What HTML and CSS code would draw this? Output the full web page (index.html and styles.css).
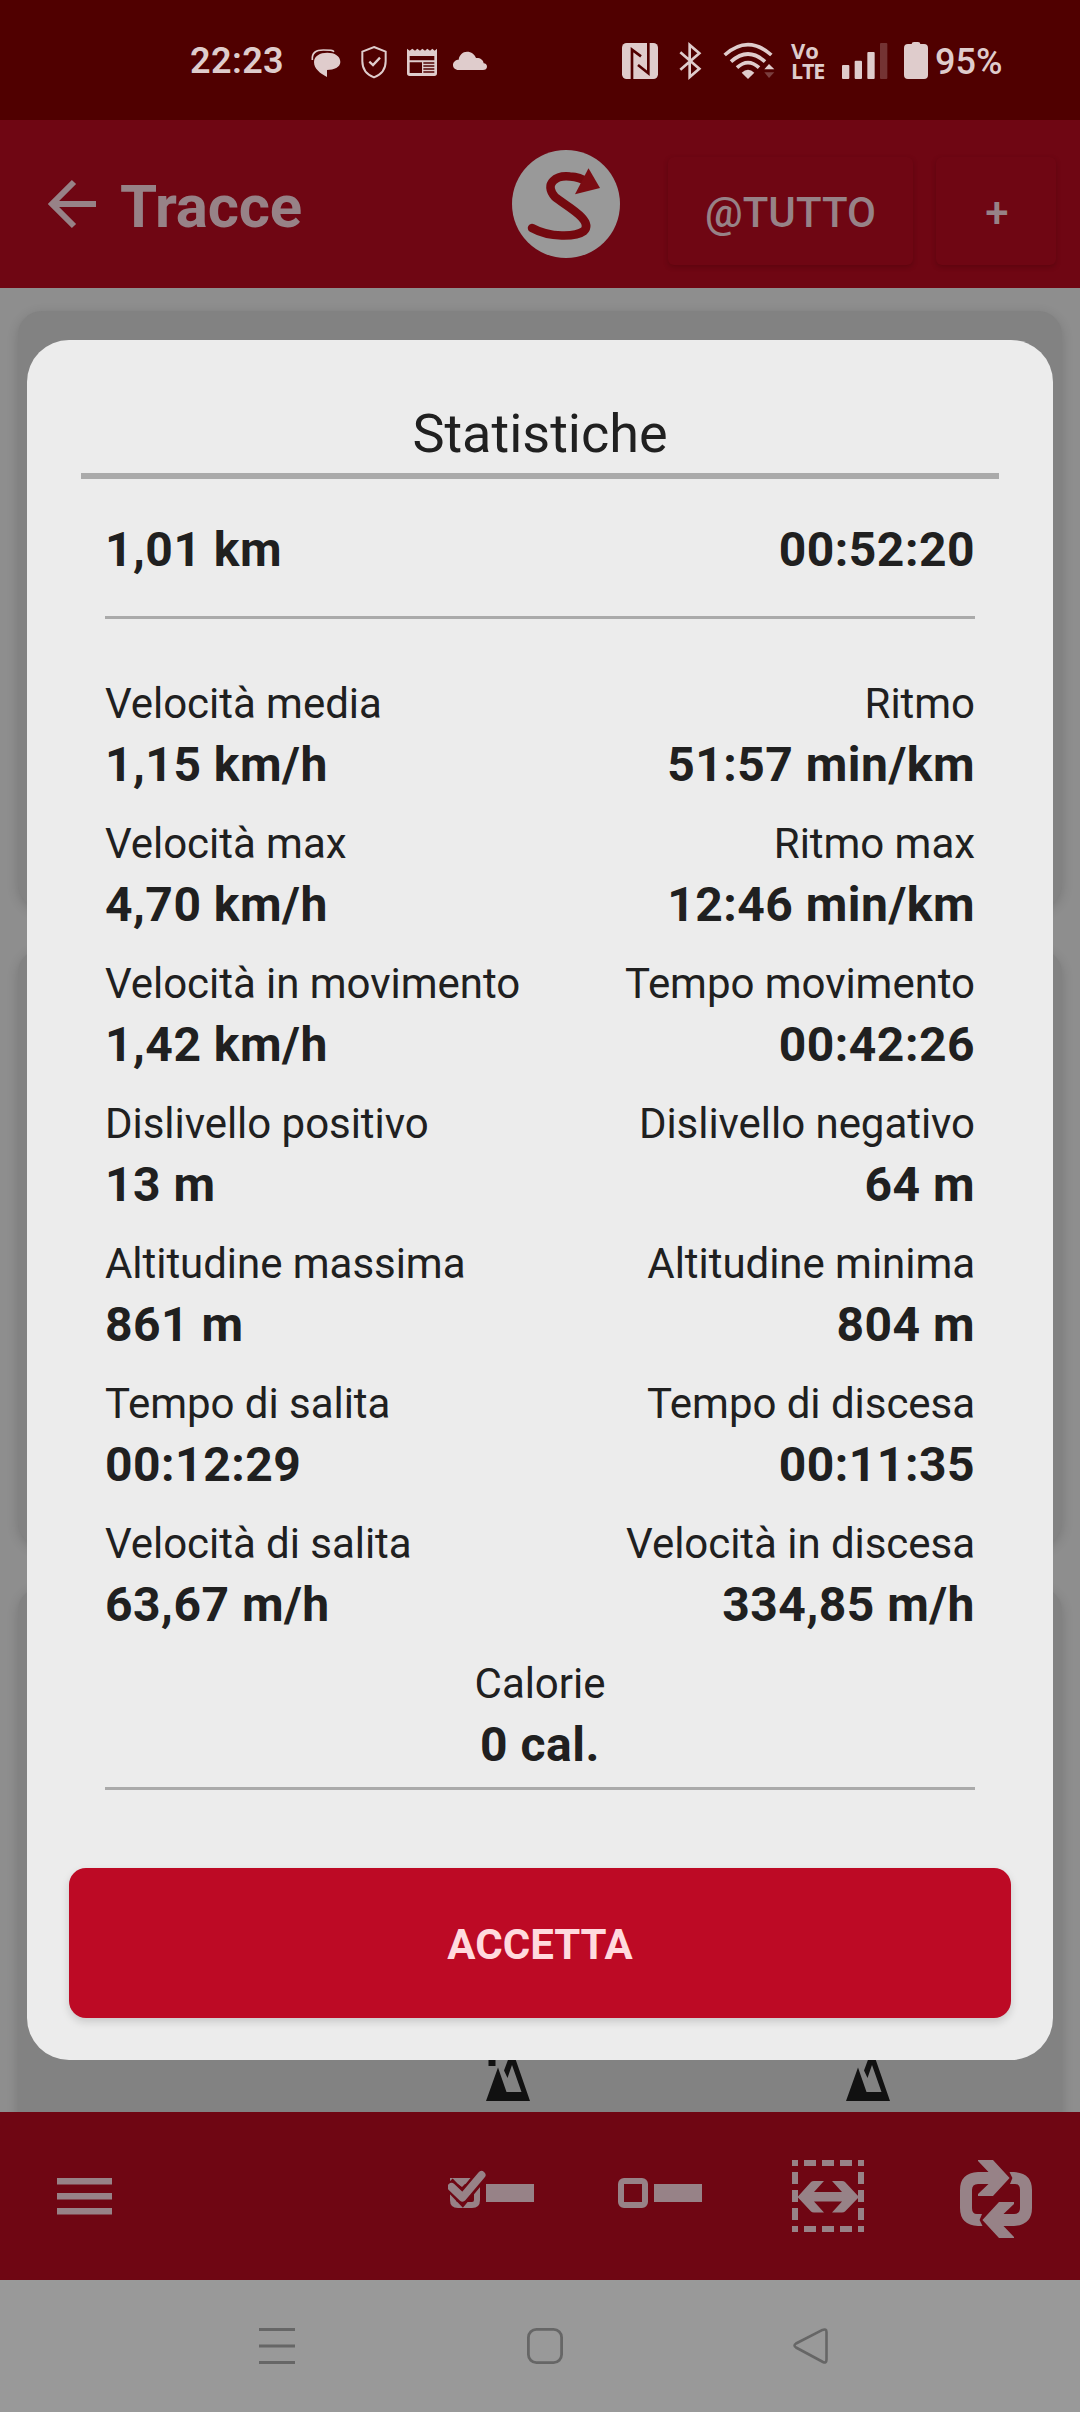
FILE: index.html
```html
<!DOCTYPE html>
<html lang="it">
<head>
<meta charset="utf-8">
<title>Tracce</title>
<link rel="stylesheet" href="styles.css">
</head>
<body>
<div class="screen">
  <header class="status">
    <span class="clock">22:23</span>
    <div class="status-left">
      <svg width="32" height="40" viewBox="450 60 96 120" fill="currentColor"><path d="M462 126C462 108 480 98 502 98S541 108 541 126C541 142 522 150 501 150V171C480 160 462 146 462 126Z"/><path d="M457 120C455 98 468 90 490 90S518 90 522 95" fill="none" stroke="currentColor" stroke-width="5"/></svg>
      <svg width="28" height="40" viewBox="600 60 84 120" fill="none" stroke="currentColor" stroke-width="6"><path d="M642 81L677 95V124C677 147 664 164 642 172C620 164 607 147 607 124V95Z"/><path d="M628 125L639 135L660 113" stroke-width="7"/></svg>
      <svg width="32" height="40" viewBox="738 60 96 120" fill="currentColor"><path fill-rule="evenodd" d="M741 86L749 92L757 86L765 92L772 86L780 92L787 86L795 92L802 86L810 92L817 86L824 92L831 86V160Q831 168 823 168H749Q741 168 741 160ZM749 108V121H823V108ZM749 127V159H786V127ZM790 127V131H823V127ZM790 136V140H823V136ZM790 145V149H823V145ZM790 154V158H823V154Z"/></svg>
      <svg width="36" height="40" viewBox="876 60 108 120" fill="currentColor"><path d="M896 150C885 150 879 143 879 135C879 125 888 119 896 119C898 105 908 95 921 95C934 95 944 103 948 114C960 113 970 119 971 130C977 130 981 135 981 140C981 146 976 150 969 150Z"/></svg>
    </div>
    <div class="status-right">
      <svg width="38" height="40" viewBox="63 60 114 120"><rect x="66" y="69" width="108" height="108" rx="14" fill="currentColor"/><path d="M96 177V89L123 109M145 69V160L114 135" fill="none" stroke="#500000" stroke-width="8"/></svg>
      <svg width="24" height="40" viewBox="234 60 72 120" fill="none" stroke="currentColor" stroke-width="8"><path d="M241 97L298 146L269 171V75L298 100L241 149"/></svg>
      <svg width="54" height="40" viewBox="366 60 162 120"><g fill="none" stroke="currentColor" stroke-width="11"><path d="M374 105Q444 43 514 105"/><path d="M393 125Q444 79 495 125"/><path d="M411 143Q444 113 477 143"/></g><path d="M425 158Q444 141 463 158L444 177Z" fill="currentColor"/><path d="M493 148L507 132L523 148Z" fill="currentColor"/><path d="M493 157H523L507 174Z" fill="currentColor" opacity=".3"/></svg>
      <div class="volte"><span class="vo">Vo</span><span class="lte">LTE</span></div>
      <svg width="46" height="40" viewBox="726 60 138 120" fill="currentColor"><rect x="726" y="135" width="22" height="42" rx="3"/><rect x="764" y="122" width="22" height="55" rx="3"/><rect x="802" y="96" width="22" height="81" rx="3"/><rect x="840" y="69" width="22" height="108" rx="3" opacity=".25"/></svg>
      <svg width="24" height="40" viewBox="912 60 72 120" fill="currentColor"><path d="M924 72H935Q935 66 942 66H954Q961 66 961 72H972Q984 72 984 84V165Q984 177 972 177H924Q912 177 912 165V84Q912 72 924 72Z"/></svg>
      <span class="battery">95%</span>
    </div>
  </header>

  <div class="toolbar">
    <svg class="back" width="48" height="50" viewBox="0 0 48 50" fill="none" stroke="currentColor" stroke-width="6"><path d="M48 25H5M26 3L4 25L26 47"/></svg>
    <h1 class="page-title">Tracce</h1>
    <svg class="logo" width="108" height="108" viewBox="0 0 108 108"><circle cx="54" cy="54" r="54" fill="#999"/><path d="M20 78C38 88 64 87 72 81C82 70 54 56 43 47C31 33 45 25 58 26.500Q68 27 75 32" fill="none" stroke="#74090f" stroke-width="8.500" stroke-linecap="round" stroke-linejoin="round"/><path d="M88 38L76.500 18.300L63 44.300Z" fill="#7b0c12"/></svg>
    <button class="chip chip-all">@TUTTO</button>
    <button class="chip chip-add">+</button>
  </div>

  <main class="list">
    <div class="card"></div>
    <div class="card"></div>
    <div class="card card-peaks">
      <svg width="44" height="54" viewBox="0 0 44 54" fill="#111"><path d="M2.500 8H9.500V19H2.500Z"/><path fill-rule="evenodd" d="M0 54L12 20.500L20.500 45H35.500L26 18L21.500 31L18 23.500L26 2L44 54Z"/></svg>
      <svg width="44" height="54" viewBox="0 0 44 54" fill="#111"><path d="M0 54L12 20.500L20.500 45H35.500L26 18L21.500 31L18 23.500L26 2L44 54Z"/></svg>
    </div>
  </main>

  <footer class="actions">
    <svg width="55" height="78" viewBox="57 160 55 78" fill="currentColor"><path d="M57 178H112V184.500H57ZM57 193H112V199.500H57ZM57 208H112V214.500H57Z"/></svg>
    <svg class="act-check" width="86" height="78" viewBox="448 160 86 78" fill="none" stroke="currentColor"><path d="M453 181H477V200Q477 205 472 205H458Q453 205 453 200Z" stroke-width="6"/><path d="M452 180H469L462 187Z" fill="currentColor" stroke="none"/><path d="M448 183L462.500 198L484 172" stroke="#6f0613" stroke-width="13"/><path d="M451.500 187L462.500 197.500L481.500 175" stroke-width="8" stroke-linecap="round" stroke-linejoin="round"/><path d="M486 184H534V202H486Z" fill="currentColor" stroke="none"/></svg>
    <svg class="act-box" width="84" height="78" viewBox="618 160 84 78"><rect x="621" y="181" width="24" height="24" rx="3" fill="none" stroke="currentColor" stroke-width="6"/><path d="M654 184H702V202H654Z" fill="currentColor"/></svg>
    <svg class="act-range" width="72" height="78" viewBox="792 160 72 78" fill="currentColor"><path d="M792 160h6v6h-6zM804 160h12v6h-12zM822 160h12v6h-12zM840 160h12v6h-12zM858 160h6v6h-6zM792 226h6v6h-6zM804 226h12v6h-12zM822 226h12v6h-12zM840 226h12v6h-12zM858 226h6v6h-6zM792 172h6v12h-6zM792 190h6v12h-6zM792 208h6v12h-6zM858 172h6v12h-6zM858 190h6v12h-6zM858 208h6v12h-6z"/><path d="M797.500 197L811 182Q812 181 814 181H824L814 192H842L832 181H842Q844 181 845 182L859 197L845 211.500Q844 212.500 842 212.500H832L842 201.500H814L824 212.500H814Q812 212.500 811 211.500Z"/></svg>
    <svg class="act-sync" width="72" height="78" viewBox="960 160 72 78" fill="currentColor"><path id="half" d="M988.500 172H978Q960 173 960 190V208Q960 225 978 226H982.500L979.600 220L982 214H977Q972 214 972 208V190Q972 184 978 184H988.500L978 194V196H993L1009.600 178L993 160H978V161Z"/><use href="#half" transform="rotate(180 996 199)"/></svg>
  </footer>

  <nav class="system-nav">
    <svg width="36" height="36" viewBox="0 0 36 36" fill="currentColor"><path d="M0 0H36V3H0ZM0 16.500H36V19.500H0ZM0 33H36V36H0Z"/></svg>
    <svg width="36" height="36" viewBox="0 0 36 36" fill="none" stroke="currentColor" stroke-width="2.800"><rect x="1.400" y="1.400" width="33.200" height="33.200" rx="8"/></svg>
    <svg width="36" height="36" viewBox="0 0 36 36" fill="none" stroke="currentColor" stroke-width="2.600" stroke-linejoin="round"><path d="M3 15.500L29.500 1.900Q33.500 0.500 33.500 4V31.500Q33.500 35.500 30 34L3 19.500Q0 17.500 3 15.500Z"/></svg>
  </nav>

  <section class="dialog">
    <h2 class="dialog-title">Statistiche</h2>
    <div class="summary"><strong>1,01 km</strong><strong>00:52:20</strong></div>
    <dl class="stats">
      <div class="stat"><dt>Velocità media</dt><dd>1,15 km/h</dd></div>
      <div class="stat end"><dt>Ritmo</dt><dd>51:57 min/km</dd></div>
      <div class="stat"><dt>Velocità max</dt><dd>4,70 km/h</dd></div>
      <div class="stat end"><dt>Ritmo max</dt><dd>12:46 min/km</dd></div>
      <div class="stat"><dt>Velocità in movimento</dt><dd>1,42 km/h</dd></div>
      <div class="stat end"><dt>Tempo movimento</dt><dd>00:42:26</dd></div>
      <div class="stat"><dt>Dislivello positivo</dt><dd>13 m</dd></div>
      <div class="stat end"><dt>Dislivello negativo</dt><dd>64 m</dd></div>
      <div class="stat"><dt>Altitudine massima</dt><dd>861 m</dd></div>
      <div class="stat end"><dt>Altitudine minima</dt><dd>804 m</dd></div>
      <div class="stat"><dt>Tempo di salita</dt><dd>00:12:29</dd></div>
      <div class="stat end"><dt>Tempo di discesa</dt><dd>00:11:35</dd></div>
      <div class="stat"><dt>Velocità di salita</dt><dd>63,67 m/h</dd></div>
      <div class="stat end"><dt>Velocità in discesa</dt><dd>334,85 m/h</dd></div>
      <div class="stat wide"><dt>Calorie</dt><dd>0 cal.</dd></div>
    </dl>
    <button class="accept">ACCETTA</button>
  </section>
</div>
</body>
</html>
```
FILE: styles.css
```css
* { box-sizing: border-box; margin: 0; padding: 0; }

body { font-family: Roboto, sans-serif; background: #8e8e8e; }

svg { display: block; flex: none; }

button { border: 0; font: inherit; }

.screen {
  position: relative;
  width: 1080px;
  height: 2412px;
  display: flex;
  flex-direction: column;
  overflow: hidden;
}

/* status bar */
.status {
  height: 120px;
  flex: none;
  display: flex;
  align-items: flex-start;
  padding: 40px 0 0 190px;
  background: #500000;
  color: #dfcccc;
}

.clock, .battery { font-size: 36px; font-weight: 600; line-height: 40px; }
.clock { width: 120px; padding-top: 1px; letter-spacing: .4px; }
.battery { padding-top: 2px; margin-left: 7px; font-weight: 500; }

.status-left { display: flex; gap: 16px; width: 311px; }
.status-left svg:nth-child(2) { margin-left: 2px; }
.status-left svg:nth-child(3) { margin-left: 2px; }
.status-left svg:nth-child(4) { margin-left: -2px; }

.status-right { display: flex; }
.status-right svg:nth-child(2) { margin-left: 19px; }
.status-right svg:nth-child(3) { margin-left: 20px; }
.status-right svg:nth-child(6) { margin-left: 16px; }

.volte {
  width: 51px;
  margin-left: 15px;
  display: flex;
  flex-direction: column;
  font-family: "Open Sans", sans-serif;
  font-weight: 700;
  font-size: 22px;
  line-height: 19.500px;
  padding-top: 1px;
}
.lte { font-size: 21.500px; letter-spacing: -1.200px; }

/* app toolbar */
.toolbar {
  height: 168px;
  flex: none;
  display: flex;
  align-items: flex-start;
  padding: 30px 0 0 48px;
  background: #6f0613;
  color: #978287;
}
.back { margin-top: 29px; }
.page-title { width: 392px; margin: 22px 0 0 24px; font-size: 60px; font-weight: 700; line-height: 70px; letter-spacing: -.2px; }
.chip {
  height: 108px;
  margin-top: 7px;
  padding-top: 2px;
  border-radius: 6px;
  background: #6f0613;
  color: #978287;
  font-size: 42px;
  font-weight: 500;
  text-align: center;
  box-shadow: 0 2px 5px rgba(40, 0, 5, .25);
}
.chip-all { width: 245px; margin-left: 48px; letter-spacing: .1px; }
.chip-add { width: 120px; margin-left: 23px; padding-left: 2px; }

/* track list */
.list {
  flex: 1;
  min-height: 0;
  overflow: hidden;
  display: flex;
  flex-direction: column;
  gap: 41px;
  padding: 23px 18px 0;
  background: #8e8e8e;
}
.card {
  height: 597px;
  flex: none;
  border-radius: 24px;
  background: #828282;
  box-shadow: 0 3px 12px rgba(0, 0, 0, .16);
}
.card-peaks { display: flex; gap: 316px; padding: 460px 0 0 467.500px; }

/* bottom actions */
.actions {
  height: 168px;
  flex: none;
  display: flex;
  padding: 48px 0 0 57px;
  background: #6f0613;
  color: #978287;
}
.act-check { margin-left: 336px; }
.act-box { margin-left: 84px; }
.act-range { margin-left: 90px; }
.act-sync { margin-left: 96px; }

.system-nav {
  height: 132px;
  flex: none;
  display: flex;
  gap: 231px;
  padding: 48px 0 0 259px;
  background: #999;
  color: #666;
}
.system-nav svg:nth-child(2) { margin-left: 1px; }
.system-nav svg:nth-child(3) { margin-left: -1px; }

/* statistics dialog, over the page */
.dialog {
  position: absolute;
  left: 27px;
  top: 340px;
  width: 1026px;
  height: 1720px;
  padding: 61px 42px 0;
  display: flex;
  flex-direction: column;
  border-radius: 42px;
  background: #ececec;
  color: #202020;
}
.dialog-title {
  margin: 0 12px;
  padding-bottom: 7px;
  border-bottom: 6px solid #aaa;
  font-size: 54px;
  font-weight: 400;
  line-height: 65px;
  text-align: center;
}
.summary {
  display: flex;
  justify-content: space-between;
  margin: 0 36px;
  padding: 41px 0 36px;
  border-bottom: 3px solid #aaa;
  font-size: 48px;
  line-height: 60px;
  letter-spacing: .5px;
}
.stats {
  display: grid;
  grid-template-columns: auto auto;
  row-gap: 18px;
  margin: 0 36px;
  padding: 54px 0 12px;
  border-bottom: 3px solid #aaa;
}
.stat dt { font-size: 42px; line-height: 62px; letter-spacing: -.04px; }
.stat dd { font-size: 48px; font-weight: 700; line-height: 60px; letter-spacing: .5px; }
.end { text-align: right; }
.wide { grid-column: 1 / -1; text-align: center; }
.accept {
  height: 150px;
  margin-top: 78px;
  padding-top: 2px;
  border-radius: 17px;
  background: #bd0a25;
  color: #ffdade;
  font-size: 42px;
  font-weight: 700;
  box-shadow: 0 4px 8px rgba(0, 0, 0, .15);
}
```
